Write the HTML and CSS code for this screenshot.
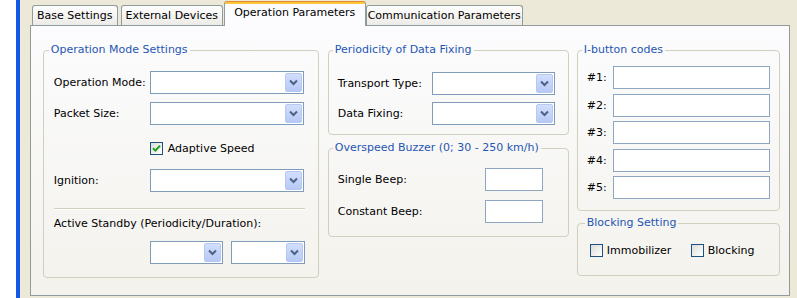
FILE: index.html
```html
<!DOCTYPE html>
<html>
<head>
<meta charset="utf-8">
<link rel="stylesheet" href="styles.css">
</head>
<body>
<div class="window">
  <div class="edge-white"></div>
  <div class="edge-blue"></div>
  <div class="main">
    <div class="tabs">
      <div class="tab t1">Base Settings</div>
      <div class="tab t2">External Devices</div>
      <div class="tab active t3">Operation Parameters</div>
      <div class="tab t4">Communication Parameters</div>
    </div>
    <div class="panel">
      <div class="col col1">
        <fieldset class="group g-opmode">
          <legend>Operation Mode Settings</legend>
          <div class="row r1"><span class="lbl lw1">Operation Mode:</span><div class="combo cw1"><span class="btn"><svg viewBox="0 0 15 19" width="15" height="19"><path d="M4 7.5 L7.5 11 L11 7.5" fill="none" stroke="#4d6185" stroke-width="2"/></svg></span></div></div>
          <div class="row r2"><span class="lbl lw1">Packet Size:</span><div class="combo cw1"><span class="btn"><svg viewBox="0 0 15 19" width="15" height="19"><path d="M4 7.5 L7.5 11 L11 7.5" fill="none" stroke="#4d6185" stroke-width="2"/></svg></span></div></div>
          <div class="chkrow r-adapt">
            <span class="chk"><svg viewBox="0 0 11 11" width="11" height="11"><path d="M2 5.2 L4.4 7.6 L9 2.8" fill="none" stroke="#21a121" stroke-width="2"/></svg></span>
            <span class="chktext">Adaptive Speed</span>
          </div>
          <div class="row r3"><span class="lbl lw1">Ignition:</span><div class="combo cw1"><span class="btn"><svg viewBox="0 0 15 19" width="15" height="19"><path d="M4 7.5 L7.5 11 L11 7.5" fill="none" stroke="#4d6185" stroke-width="2"/></svg></span></div></div>
          <div class="sep"></div>
          <div class="standby-lbl">Active Standby (Periodicity/Duration):</div>
          <div class="row r-standby">
            <div class="combo cw-a"><span class="btn"><svg viewBox="0 0 15 19" width="15" height="19"><path d="M4 7.5 L7.5 11 L11 7.5" fill="none" stroke="#4d6185" stroke-width="2"/></svg></span></div>
            <div class="combo cw-b"><span class="btn"><svg viewBox="0 0 15 19" width="15" height="19"><path d="M4 7.5 L7.5 11 L11 7.5" fill="none" stroke="#4d6185" stroke-width="2"/></svg></span></div>
          </div>
        </fieldset>
      </div>
      <div class="col col2">
        <fieldset class="group g-period">
          <legend>Periodicity of Data Fixing</legend>
          <div class="row p1"><span class="lbl lw2">Transport Type:</span><div class="combo cw2"><span class="btn"><svg viewBox="0 0 15 19" width="15" height="19"><path d="M4 7.5 L7.5 11 L11 7.5" fill="none" stroke="#4d6185" stroke-width="2"/></svg></span></div></div>
          <div class="row p2"><span class="lbl lw2">Data Fixing:</span><div class="combo cw2"><span class="btn"><svg viewBox="0 0 15 19" width="15" height="19"><path d="M4 7.5 L7.5 11 L11 7.5" fill="none" stroke="#4d6185" stroke-width="2"/></svg></span></div></div>
        </fieldset>
        <fieldset class="group g-buzzer">
          <legend>Overspeed Buzzer (0; 30 - 250 km/h)</legend>
          <div class="row b1"><span class="lbl lw3">Single Beep:</span><div class="field fw3"></div></div>
          <div class="row b2"><span class="lbl lw3">Constant Beep:</span><div class="field fw3"></div></div>
        </fieldset>
      </div>
      <div class="col col3">
        <fieldset class="group g-ibutton">
          <legend>I-button codes</legend>
          <div class="codes">
            <div class="row code"><span class="lbl lw4">#1:</span><div class="field fw4"></div></div>
            <div class="row code"><span class="lbl lw4">#2:</span><div class="field fw4"></div></div>
            <div class="row code"><span class="lbl lw4">#3:</span><div class="field fw4"></div></div>
            <div class="row code"><span class="lbl lw4">#4:</span><div class="field fw4"></div></div>
            <div class="row code"><span class="lbl lw4">#5:</span><div class="field fw4"></div></div>
          </div>
        </fieldset>
        <fieldset class="group g-block">
          <legend>Blocking Setting</legend>
          <div class="chkrow r-block">
            <div class="chkitem immo"><span class="chk"></span><span class="chktext">Immobilizer</span></div>
            <div class="chkitem blk"><span class="chk"></span><span class="chktext">Blocking</span></div>
          </div>
        </fieldset>
      </div>
    </div>
  </div>
</div>
</body>
</html>
```

FILE: styles.css
```css
html, body {
  margin: 0;
  padding: 0;
}
body {
  width: 797px;
  height: 298px;
  overflow: hidden;
  background: #ece9d8;
  font-family: "DejaVu Sans", Verdana, sans-serif;
  font-size: 11px;
  color: #000;
}
.window {
  display: flex;
  height: 298px;
}
.edge-white {
  width: 16px;
  background: #ffffff;
}
.edge-blue {
  width: 4px;
  background: #1257e6;
}
.main {
  width: 777px;
  padding-left: 10px;
  background: #ece9d8;
}

/* tabs */
.tabs {
  display: flex;
  align-items: flex-end;
  height: 25px;
  padding-left: 2px;
  position: relative;
  z-index: 2;
}
.tab {
  box-sizing: border-box;
  height: 20px;
  border: 1px solid #919b9c;
  border-bottom: none;
  border-radius: 3px 3px 0 0;
  background: linear-gradient(#fefefe, #ecebe6);
  text-align: center;
  line-height: 19px;
  white-space: nowrap;
}
.t1 { width: 86px; }
.t2 { width: 102px; margin-left: 3px; }
.t3 { width: 142px; margin-left: 1px; }
.t4 { width: 157px; }
.tab.active {
  height: 25px;
  margin-bottom: -1px;
  border-top: none;
  background: linear-gradient(#e68b2c 0, #e68b2c 1px, #ffc83c 1px, #ffc83c 3px, #fcfcfe 3px, #fcfcfe 100%);
  line-height: 22px;
  padding-top: 1px;
}

/* panel */
.panel {
  box-sizing: border-box;
  width: 760px;
  height: 271px;
  border: 1px solid #919b9c;
  background: linear-gradient(#fcfcfe, #f3f2ec);
  display: flex;
  align-items: flex-start;
  padding: 17px 0 0 12px;
}
.col {
  display: flex;
  flex-direction: column;
}
.col1 { width: 276px; }
.col2 { width: 241px; margin-left: 9px; }
.col3 { width: 203px; margin-left: 8px; }

.group {
  box-sizing: border-box;
  margin: 0;
  min-width: 0;
  border: 1px solid #d0d0bf;
  border-radius: 4px;
}
.group legend {
  padding: 0 2px;
  margin-left: -5px;
  line-height: 14px;
  color: #1f56b3;
}

.row {
  display: flex;
  align-items: center;
  height: 23px;
}
.lbl {
  white-space: nowrap;
  flex: none;
}
.combo {
  box-sizing: border-box;
  height: 23px;
  border: 1px solid #7f9db9;
  background: #fff;
  display: flex;
  justify-content: flex-end;
  padding: 1px;
}
.btn {
  box-sizing: border-box;
  width: 17px;
  height: 19px;
  border: 1px solid #b7c9f3;
  border-radius: 2px;
  background: linear-gradient(#d2defc, #b6c9f6);
  display: flex;
  align-items: center;
  justify-content: center;
}
.btn svg { display: block; }
.field {
  box-sizing: border-box;
  height: 23px;
  border: 1px solid #8ea6c0;
  background: #fff;
}

/* col1 */
.g-opmode { padding: 0 13px 13px 10px; }
.lw1 { width: 96px; }
.cw1 { width: 154px; }
.r1 { margin-top: 14px; }
.r2 { margin-top: 8px; }
.r3 { margin-top: 13px; }
.chkrow {
  display: flex;
  align-items: center;
  height: 16px;
}
.r-adapt { margin-top: 15px; padding-left: 96px; }
.chk {
  box-sizing: border-box;
  width: 13px;
  height: 13px;
  border: 1px solid #1c5180;
  background: linear-gradient(135deg, #dcdcd7, #ffffff);
  display: flex;
  align-items: center;
  justify-content: center;
  flex: none;
}
.chk svg { display: block; }
.chktext {
  margin-left: 5px;
  white-space: nowrap;
}
.sep {
  margin-top: 16px;
  border-top: 1px solid #d0d0bf;
  border-bottom: 1px solid #ffffff;
}
.standby-lbl {
  margin-top: 6px;
  line-height: 16px;
  white-space: nowrap;
}
.r-standby { margin-top: 9px; padding-left: 96px; }
.cw-a { width: 73px; }
.cw-b { width: 74px; margin-left: 8px; }

/* col2 */
.g-period { padding: 0 13px 9px 9px; }
.lw2 { width: 94px; }
.cw2 { width: 123px; }
.p1 { margin-top: 15px; }
.p2 { margin-top: 7px; }
.g-buzzer { padding: 0 13px 13px 9px; margin-top: 6px; }
.lw3 { width: 147px; }
.fw3 { width: 58px; }
.b1 { margin-top: 13px; }
.b2 { margin-top: 9px; }

/* col3 */
.g-ibutton { padding: 9px 9px 11px 9px; }
.codes {
  display: flex;
  flex-direction: column;
  gap: 4.5px;
}
.lw4 { width: 26px; }
.fw4 { width: 157px; }
.g-block { padding: 0 9px 17px 12px; margin-top: 5px; }
.r-block { margin-top: 12px; }
.chkitem {
  display: flex;
  align-items: center;
}
.immo { width: 101px; }
.blk .chktext { margin-left: 4px; }
.immo .chktext { margin-left: 4px; }
```
